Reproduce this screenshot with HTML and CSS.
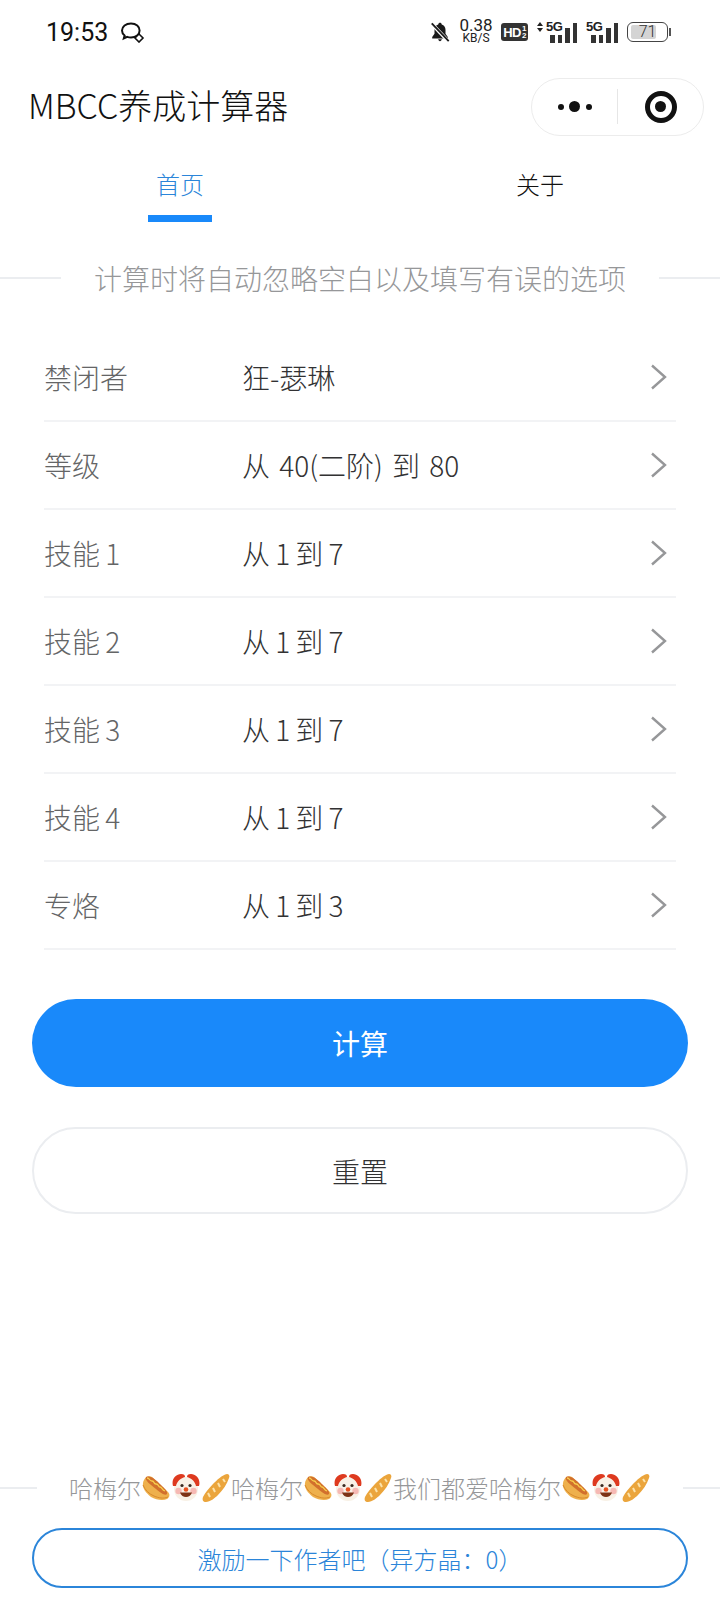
FILE: index.html
```html
<!DOCTYPE html>
<html>
<head>
<meta charset="utf-8">
<title>MBCC养成计算器</title>
<link rel="stylesheet" href="styles.css">
</head>
<body>
<svg class="defs" width="0" height="0">
  <symbol id="chev" viewBox="0 0 18 26">
    <path d="M2 1.500l13 11.500L2 24.500" fill="none" stroke="#969799" stroke-width="2.400"/>
  </symbol>
  <symbol id="hotdog" viewBox="0 0 28 28">
    <path d="M1 9c-1 5 3 10 8 14 5 3 12 4 16 2 3-2 3-5 1-7L10 3C6 1 2 4 1 9z" fill="#eeb04c"/>
    <path d="M4 3c5-2 10 3 15 8 3 3 7 6 6 9-2 2-6-1-11-5C9 11 2 6 4 3z" fill="#d2702c"/>
    <path d="M5 4c3 0 2 3 5 3s1 3 4 3 2 3 4 3 2 3 5 4" fill="none" stroke="#f7d04e" stroke-width="1.300"/>
    <path d="M1 11c2 5 6 9 11 11s9 3 14 1" fill="none" stroke="#d98a2b" stroke-width="1"/>
  </symbol>
  <symbol id="clown" viewBox="0 0 28 28">
    <circle cx="14" cy="15" r="12" fill="#f8f1e6"/>
    <path d="M1 12C-1 5 4 0 9 0c3 0 4 1 4 3-4 1-8 4-9 9z" fill="#de3a1f"/>
    <path d="M27 12c2-7-3-12-8-12-3 0-4 1-4 3 4 1 8 4 9 9z" fill="#de3a1f"/>
    <circle cx="6.500" cy="17" r="3.200" fill="#f6b9b4"/>
    <circle cx="21.500" cy="17" r="3.200" fill="#f6b9b4"/>
    <circle cx="10" cy="11.500" r="1.600" fill="#3a2a20"/>
    <circle cx="18" cy="11.500" r="1.600" fill="#3a2a20"/>
    <path d="M8 18.500c2 6 10 6 12 0z" fill="#7d3316"/>
    <circle cx="14" cy="15.500" r="2.300" fill="#e9511f"/>
  </symbol>
  <symbol id="bread" viewBox="0 0 28 28">
    <path d="M25 0c2 0 3 2 2 4-2 6-6 12-11 17-3 3-8 7-12 7-3 0-4-2-3-5 2-4 6-9 10-13s9-9 14-10z" fill="#eba53c"/>
    <path d="M21 5l2 3M16 9l2 4M11 14l2 4M6 19l2 4" fill="none" stroke="#fbe3ab" stroke-width="2"/>
  </symbol>
</svg>

<div class="status-bar">
  <div class="status-left">
    <span class="clock">19:53</span>
    <svg class="msg-icon" viewBox="0 0 26 22" width="26" height="22">
      <path d="M12 2.500c-5.200 0-9 3-9 7 0 2 1 3.700 2.600 5l-.8 3 3.400-1.600c1.200.4 2.500.6 3.800.6 5 0 8.600-3 8.600-7S17.200 2.500 12 2.500z" fill="none" stroke="#111" stroke-width="2"/>
      <path d="M20 13l4 4-4 4-4-4z" fill="#fff" stroke="#111" stroke-width="1.600"/>
    </svg>
  </div>
  <div class="status-right">
    <svg viewBox="0 0 24 24" width="22" height="22">
      <path d="M12 2c-1 0-1.800.7-1.900 1.700C7.500 4.500 6 6.700 6 9.500V14l-2.500 3.500V19h17v-1.500L18 14V9.500c0-2.800-1.500-5-4.100-5.800C13.800 2.700 13 2 12 2zM10 20c.2 1.200 1 2 2 2s1.800-.8 2-2z" fill="#1a1a1a"/>
      <path d="M3 3l18 19" stroke="#fff" stroke-width="4"/>
      <path d="M3 2.500l18.500 19.500" stroke="#1a1a1a" stroke-width="2"/>
    </svg>
    <div class="speed"><span>0.38</span><span class="speed-unit">KB/S</span></div>
    <div class="hd">HD<span class="hd-num">1<br>2</span></div>
    <div class="signal sig-data">
      <svg class="updown" viewBox="0 0 6 10" width="6" height="10"><path d="M3 0l3 4H0zM3 10L0 6h6z" fill="#222"/></svg>
      <span class="five-g">5G</span>
      <span class="bar b1"></span><span class="bar b2"></span><span class="bar b3"></span><span class="bar b4"></span>
    </div>
    <div class="signal">
      <span class="five-g">5G</span>
      <span class="bar b1"></span><span class="bar b2"></span><span class="bar b3"></span><span class="bar b4"></span>
    </div>
    <div class="battery"><div class="battery-body"><div class="battery-fill"></div><span class="battery-num">71</span></div><div class="battery-tip"></div></div>
  </div>
</div>

<div class="nav-bar">
  <div class="nav-title">MBCC养成计算器</div>
  <div class="capsule">
    <div class="capsule-btn">
      <span class="dot"></span><span class="dot big"></span><span class="dot"></span>
    </div>
    <div class="capsule-sep"></div>
    <div class="capsule-btn">
      <div class="target"><div class="target-in"></div></div>
    </div>
  </div>
</div>

<div class="tabs">
  <div class="tab active"><span>首页</span><div class="tab-line"></div></div>
  <div class="tab"><span>关于</span></div>
</div>

<div class="divider top-tip"><span>计算时将自动忽略空白以及填写有误的选项</span></div>

<div class="cells">
  <div class="cell"><div class="cell-label">禁闭者</div><div class="cell-value">狂-瑟琳</div><svg class="arrow"><use href="#chev"/></svg></div>
  <div class="cell"><div class="cell-label">等级</div><div class="cell-value value-wide">从 40(二阶) 到 80</div><svg class="arrow"><use href="#chev"/></svg></div>
  <div class="cell"><div class="cell-label">技能 1</div><div class="cell-value">从 1 到 7</div><svg class="arrow"><use href="#chev"/></svg></div>
  <div class="cell"><div class="cell-label">技能 2</div><div class="cell-value">从 1 到 7</div><svg class="arrow"><use href="#chev"/></svg></div>
  <div class="cell"><div class="cell-label">技能 3</div><div class="cell-value">从 1 到 7</div><svg class="arrow"><use href="#chev"/></svg></div>
  <div class="cell"><div class="cell-label">技能 4</div><div class="cell-value">从 1 到 7</div><svg class="arrow"><use href="#chev"/></svg></div>
  <div class="cell"><div class="cell-label">专烙</div><div class="cell-value">从 1 到 3</div><svg class="arrow"><use href="#chev"/></svg></div>
</div>

<div class="btn btn-primary">计算</div>
<div class="btn btn-plain">重置</div>

<div class="spacer"></div>

<div class="divider bottom-tip"><span class="tip-line">哈梅尔<svg class="emo"><use href="#hotdog"/></svg><svg class="emo"><use href="#clown"/></svg><svg class="emo"><use href="#bread"/></svg>哈梅尔<svg class="emo"><use href="#hotdog"/></svg><svg class="emo"><use href="#clown"/></svg><svg class="emo"><use href="#bread"/></svg>我们都爱哈梅尔<svg class="emo"><use href="#hotdog"/></svg><svg class="emo"><use href="#clown"/></svg><svg class="emo"><use href="#bread"/></svg></span></div>
<div class="btn btn-line">激励一下作者吧（异方晶：0）</div>
</body>
</html>
```

FILE: styles.css
```css
html, body {
  margin: 0;
  padding: 0;
  background: #fff;
}
body {
  width: 720px;
  height: 1612px;
  display: flex;
  flex-direction: column;
  font-family: "Noto Sans CJK SC", "Noto Sans", sans-serif;
  overflow: hidden;
}
.defs {
  display: block;
  height: 0;
}

.status-bar {
  height: 64px;
  display: flex;
  justify-content: space-between;
  align-items: center;
  padding: 0 49px 0 46px;
}
.status-left, .status-right {
  display: flex;
  align-items: center;
}
.clock {
  font-family: Roboto, sans-serif;
  font-size: 25px;
  color: #111;
}
.msg-icon {
  margin-left: 11px;
}
.status-right {
  gap: 9px;
}
.speed {
  width: 32px;
  display: flex;
  flex-direction: column;
  align-items: center;
  font-family: Roboto, sans-serif;
  font-size: 17px;
  line-height: 13px;
  color: #222;
}
.speed-unit {
  font-size: 12px;
}
.hd {
  display: flex;
  align-items: center;
  justify-content: center;
  width: 27px;
  height: 18px;
  background: #333;
  border-radius: 3px;
  color: #fff;
  font-family: "Liberation Sans", sans-serif;
  font-weight: 700;
  font-size: 13px;
  letter-spacing: -0.5px;
}
.hd-num {
  font-size: 8px;
  line-height: 7px;
  margin-left: 1px;
}
.signal {
  position: relative;
  display: flex;
  align-items: flex-end;
  justify-content: flex-end;
  gap: 3px;
  width: 32px;
  height: 21px;
}
.sig-data {
  width: 40px;
}
.five-g {
  position: absolute;
  left: 0;
  top: -1px;
  font-family: "Liberation Sans", sans-serif;
  font-weight: 700;
  font-size: 13px;
  line-height: 12px;
  letter-spacing: -0.5px;
  color: #222;
}
.sig-data .five-g {
  left: 9px;
}
.updown {
  position: absolute;
  left: 0;
  top: 0;
}
.bar {
  width: 4.500px;
  background: #333;
}
.b1, .b2 {
  height: 8px;
}
.b3 {
  height: 15px;
}
.b4 {
  height: 20px;
}
.battery {
  display: flex;
  align-items: center;
  gap: 1px;
}
.battery-body {
  position: relative;
  width: 41px;
  height: 20px;
  border: 1.500px solid #444;
  border-radius: 6px;
  padding: 2px 3px;
  box-sizing: border-box;
}
.battery-fill {
  width: 75%;
  height: 100%;
  background: #d4d4d4;
  border-radius: 2px;
}
.battery-num {
  position: absolute;
  left: 0;
  right: 0;
  top: 0;
  text-align: center;
  font-family: Roboto, sans-serif;
  font-weight: 300;
  font-size: 16px;
  line-height: 17px;
  color: #333;
}
.battery-tip {
  width: 2px;
  height: 8px;
  background: #555;
}

.nav-bar {
  height: 80px;
  display: flex;
  justify-content: space-between;
  align-items: center;
  padding: 0 16px 0 28px;
}
.nav-title {
  font-size: 34px;
  color: #111;
  font-weight: 300;
}
.capsule {
  width: 173px;
  height: 58px;
  margin-top: 5px;
  box-sizing: border-box;
  border: 1px solid #ececec;
  border-radius: 29px;
  display: flex;
  align-items: center;
}
.capsule-btn {
  flex: 1;
  display: flex;
  align-items: center;
  justify-content: center;
  gap: 5.500px;
}
.capsule-sep {
  width: 1px;
  height: 35px;
  background: #e6e6e6;
}
.dot {
  width: 6px;
  height: 6px;
  border-radius: 50%;
  background: #111;
}
.dot.big {
  width: 11px;
  height: 11px;
}
.target {
  width: 32px;
  height: 32px;
  box-sizing: border-box;
  border: 5px solid #111;
  border-radius: 50%;
  display: flex;
  align-items: center;
  justify-content: center;
}
.target-in {
  width: 11px;
  height: 11px;
  border-radius: 50%;
  background: #111;
}

.tabs {
  display: flex;
  height: 78px;
}
.tab {
  flex: 1;
  display: flex;
  flex-direction: column;
  align-items: center;
  font-size: 24px;
  font-weight: 300;
  line-height: 36px;
  padding-top: 22px;
  color: #111;
}
.tab.active {
  color: #2b85d9;
}
.tab-line {
  width: 64px;
  height: 7px;
  margin-top: 13px;
  background: #1989fa;
}

.divider {
  display: flex;
  align-items: center;
  justify-content: center;
  white-space: nowrap;
  color: #969799;
  font-weight: 300;
}
.divider::before, .divider::after {
  content: "";
  flex: 1;
  height: 2px;
  background: #ebedf0;
}
.top-tip {
  font-size: 28px;
  line-height: 40px;
  margin-top: 36px;
  gap: 33px;
}
.cells {
  margin: 36px 44px 0;
}
.cell {
  height: 86px;
  border-bottom: 2px solid #f2f3f5;
  display: flex;
  align-items: center;
  font-size: 28px;
  font-weight: 300;
  word-spacing: -1px;
}
.cell-label {
  width: 198px;
  color: #646566;
}
.cell-value {
  flex: 1;
  color: #323233;
}
.value-wide {
  word-spacing: 3px;
}
.arrow {
  width: 18px;
  height: 26px;
  margin-right: 8px;
}

.btn {
  margin: 0 32px;
  box-sizing: border-box;
  display: flex;
  align-items: center;
  justify-content: center;
  border-radius: 44px;
  font-weight: 300;
}
.btn-primary {
  height: 88px;
  margin-top: 49px;
  background: #1989fa;
  color: #fff;
  font-size: 28px;
  font-weight: 400;
}
.btn-plain {
  height: 87px;
  margin-top: 40px;
  border: 2px solid #ebedf0;
  color: #323233;
  font-size: 28px;
}
.spacer {
  flex: 1;
}
.bottom-tip {
  font-size: 24px;
  line-height: 34px;
  gap: 32px;
}
.tip-line {
  display: inline-flex;
  align-items: center;
}
.emo {
  width: 28px;
  height: 28px;
  margin: 0 1px;
}
.btn-line {
  height: 60px;
  margin-top: 23px;
  margin-bottom: 24px;
  border: 2px solid #2b85d9;
  color: #2b85d9;
  font-size: 24px;
}
```
